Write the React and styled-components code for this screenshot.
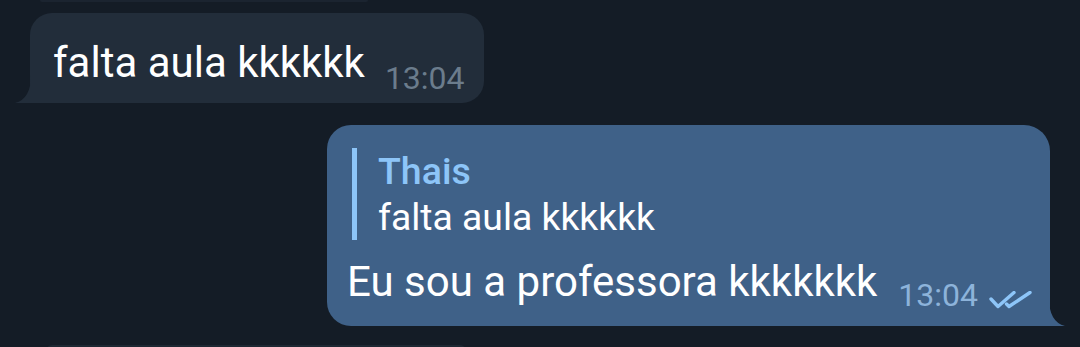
import React from "react";
import styled, { createGlobalStyle } from "styled-components";

const Global = createGlobalStyle`
  html, body {
    margin: 0;
    padding: 0;
    background: #141c26;
    overflow: hidden;
  }
  body {
    font-family: Roboto, "Noto Sans", "Liberation Sans", sans-serif;
    -webkit-font-smoothing: antialiased;
  }
`;

const Chat = styled.div`
  width: 1080px;
  height: 347px;
  background: #141c26;
  display: flex;
  flex-direction: column;
  overflow: hidden;
`;

const Stub = styled.div`
  height: ${(p) => p.$h}px;
  width: ${(p) => p.$w}px;
  margin-left: ${(p) => p.$left}px;
  margin-top: ${(p) => p.$top || 0}px;
  background: ${(p) => p.$bg};
  border-radius: ${(p) => p.$radius};
  flex-shrink: 0;
`;

const Row = styled.div`
  display: flex;
  justify-content: ${(p) => (p.$out ? "flex-end" : "flex-start")};
  padding: ${(p) => (p.$out ? "0 30px 0 0" : "0 0 0 30px")};
  margin-top: ${(p) => p.$top}px;
  flex-shrink: 0;
`;

const Bubble = styled.div`
  position: relative;
  display: flex;
  flex-direction: column;
  background: ${(p) => (p.$out ? "#3f6188" : "#222d3a")};
  border-radius: ${(p) => (p.$out ? "24px 26px 0 24px" : "22px 22px 22px 0")};
  padding: ${(p) => (p.$out ? "23px 18px 16px 20px" : "26px 19px 10px 23px")};
`;

const Tail = styled.svg`
  position: absolute;
  bottom: 0;
  width: 16px;
  height: 28px;
  ${(p) => (p.$out ? "right: -15px;" : "left: -15px;")}
`;

const Line = styled.div`
  display: flex;
  align-items: flex-end;
`;

const Text = styled.span`
  font-size: 42px;
  line-height: 48px;
  color: #ffffff;
  white-space: nowrap;
  margin-bottom: ${(p) => p.$mb}px;
`;

const Meta = styled.span`
  display: flex;
  align-items: flex-end;
  margin-left: ${(p) => p.$ml}px;
`;

const Time = styled.span`
  font-size: 32px;
  line-height: 30px;
  color: ${(p) => (p.$out ? "#8db3da" : "#6b7c8c")};
  white-space: nowrap;
`;

const Checks = styled.svg`
  width: 44px;
  height: 18px;
  margin-left: 10px;
  margin-bottom: 1px;
`;

const Quote = styled.div`
  display: flex;
  flex-direction: column;
  border-left: 5px solid #8dc5f8;
  margin-left: 5px;
  padding-left: 21px;
  margin-bottom: 18px;
`;

const QuoteName = styled.span`
  font-size: 37.5px;
  line-height: 46px;
  font-weight: 500;
  color: #8dc5f8;
`;

const QuoteText = styled.span`
  font-size: 37.3px;
  line-height: 46px;
  color: #ffffff;
  white-space: nowrap;
`;

export default function App() {
  return (
    <>
      <Global />
      <Chat>
        <Stub $h={2} $w={328} $left={40} $bg="#1b2430" $radius="0 0 20px 20px" />
        <Row $top={11}>
          <Bubble>
            <Tail $out={false} viewBox="0 0 16 28" preserveAspectRatio="none">
              <path d="M16 0 Q16 24 0 28 L16 28 Z" fill="#222d3a" />
            </Tail>
            <Line>
              <Text $mb={6}>falta aula kkkkkk</Text>
              <Meta $ml={20}>
                <Time>13:04</Time>
              </Meta>
            </Line>
          </Bubble>
        </Row>
        <Row $out $top={22}>
          <Bubble $out>
            <Tail $out viewBox="0 0 16 28" preserveAspectRatio="none">
              <path d="M0 0 Q0 24 16 28 L0 28 Z" fill="#3f6188" />
            </Tail>
            <Quote>
              <QuoteName>Thais</QuoteName>
              <QuoteText>falta aula kkkkkk</QuoteText>
            </Quote>
            <Line>
              <Text $mb={4}>Eu sou a professora kkkkkkk</Text>
              <Meta $ml={21}>
                <Time $out>13:04</Time>
                <Checks viewBox="0 0 44 18">
                  <path
                    d="M3 8 L10 15.5 L26 1.5 M18.5 13 L21 15.5 L42 1.5"
                    fill="none"
                    stroke="#8dc5f8"
                    strokeWidth="3.4"
                    strokeLinecap="round"
                    strokeLinejoin="round"
                  />
                </Checks>
              </Meta>
            </Line>
          </Bubble>
        </Row>
        <Stub $h={6} $w={420} $left={46} $top={19} $bg="#1e2833" $radius="14px 14px 0 0" />
      </Chat>
    </>
  );
}
